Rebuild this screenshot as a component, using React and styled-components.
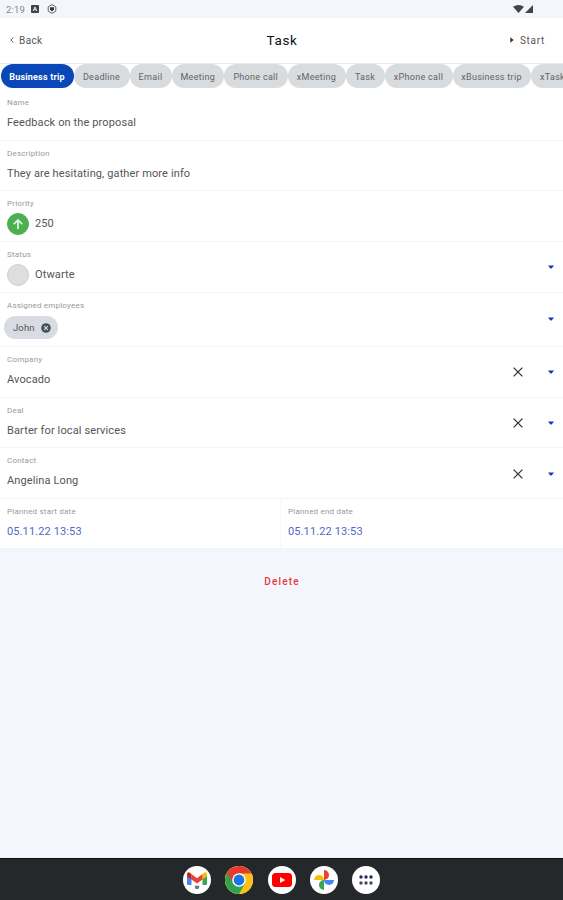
import React from "react";

import styled, { createGlobalStyle } from "styled-components";

const types = [
  { name: "Business trip", width: 73 },
  { name: "Deadline", width: 56 },
  { name: "Email", width: 42 },
  { name: "Meeting", width: 52.5 },
  { name: "Phone call", width: 63.5 },
  { name: "xMeeting", width: 58 },
  { name: "Task", width: 39 },
  { name: "xPhone call", width: 68 },
  { name: "xBusiness trip", width: 78 },
  { name: "xTask", width: 44 }
];

const Clear = () => (
  <svg width="10" height="10" viewBox="0 0 10 10">
    <path d="M.6.6l8.8 8.8M9.4.6L.6 9.4" stroke="#333" strokeWidth="1.3" />
  </svg>
);

const Caret = () => (
  <svg width="6" height="4" viewBox="0 0 6 4">
    <path d="M0 .5h6L3.6 3.5H2.4z" fill="#1c35bd" />
  </svg>
);

function Field({ label, height = 50.75, clear, select, children }) {
  return (
    <Row $height={height}>
      <Label>{label}</Label>
      <Content>{children}</Content>
      {select && (
        <Actions $clear={clear}>
          {clear && <Clear />}
          <Caret />
        </Actions>
      )}
    </Row>
  );
}

export default function App() {
  return (
    <Screen>
      <GlobalStyle />
      <StatusBar>
        <Clock>2:19</Clock>
        <svg width="8" height="8" viewBox="0 0 8 8">
          <rect width="8" height="8" rx="1" fill="#444" />
          <path d="M2.2 6L4 2l1.8 4M3 4.7h2" fill="none" stroke="#fff" strokeWidth=".9" />
        </svg>
        <svg width="10" height="10" viewBox="0 0 10 10">
          <path d="M5 .6l3.8 2.2v4.4L5 9.4 1.2 7.2V2.8z" fill="none" stroke="#666" strokeWidth="1" />
          <path d="M3 3.2h4v2.2L5 7.5 3 5.4z" fill="#333" />
        </svg>
        <Signals>
          <svg width="11" height="8" viewBox="0 0 11 8">
            <path d="M0 1.8Q5.5-1.6 11 1.8L5.5 8z" fill="#444" />
          </svg>
          <svg width="8" height="8" viewBox="0 0 8 8">
            <path d="M8 0v8H0z" fill="#444" />
          </svg>
        </Signals>
      </StatusBar>

      <Header>
        <NavButton>
          <svg width="4" height="6" viewBox="0 0 4 6">
            <path d="M3.4.5L.8 3l2.6 2.5" fill="none" stroke="#444" strokeWidth=".9" />
          </svg>
          Back
        </NavButton>
        <Title>Task</Title>
        <NavButton $end>
          <svg width="4" height="6" viewBox="0 0 4 6">
            <path d="M.3.3L3.7 3 .3 5.7z" fill="#333" />
          </svg>
          Start
        </NavButton>
      </Header>

      <Chips>
        {types.map((type, i) => (
          <Chip key={type.name} $width={type.width} $active={i === 0}>
            {type.name}
          </Chip>
        ))}
      </Chips>

      <Field label="Name">Feedback on the proposal</Field>
      <Field label="Description">They are hesitating, gather more info</Field>
      <Field label="Priority">
        <Dot $color="#4caf50">
          <svg width="12" height="12" viewBox="0 0 12 12">
            <path d="M6 11V2M1.8 6.2L6 2l4.2 4.2" fill="none" stroke="#d9f2da" strokeWidth="1.9" />
          </svg>
        </Dot>
        250
      </Field>
      <Field label="Status" select>
        <Dot $color="#dedede" $border="#cfcfcf" />
        Otwarte
      </Field>
      <Field label="Assigned employees" height={54} select>
        <Person>
          John
          <svg width="10" height="10" viewBox="0 0 10 10">
            <circle cx="5" cy="5" r="4.8" fill="#46525a" />
            <path d="M3.2 3.2l3.6 3.6M6.8 3.2L3.2 6.8" stroke="#dce0e5" strokeWidth="1.1" />
          </svg>
        </Person>
      </Field>
      <Field label="Company" select clear>Avocado</Field>
      <Field label="Deal" select clear>Barter for local services</Field>
      <Field label="Contact" select clear>Angelina Long</Field>
      <Dates>
        <Field label="Planned start date" height={50}>
          <DateValue>05.11.22 13:53</DateValue>
        </Field>
        <Field label="Planned end date" height={50}>
          <DateValue>05.11.22 13:53</DateValue>
        </Field>
      </Dates>

      <Delete>Delete</Delete>

      <Dock>
        <AppIcon>
          <svg width="20" height="20" viewBox="0 0 20 20">
            <path d="M0 4.5l4.5 3V15H1.2Q0 15 0 13.8z" fill="#4285f4" />
            <path d="M20 4.5l-4.5 3V15h3.3Q20 15 20 13.8z" fill="#34a853" />
            <path d="M15.5 4l2-1.6q2.5-.8 2.5 2.1v1.8L15.5 9.5z" fill="#fbbc04" />
            <path d="M4.5 4L10 8.2 15.5 4v5.5L10 13.6 4.5 9.5z" fill="#ea4335" />
            <path d="M0 4.5Q0 1.6 2.5 2.4L4.5 4v5.5L0 6.3z" fill="#c5221f" />
            <path d="M7.5 15.8h5L11.5 19h-3z" fill="#777" />
          </svg>
        </AppIcon>
        <AppIcon>
          <svg width="28" height="28" viewBox="0 0 28 28">
            <circle cx="14" cy="14" r="14" fill="#fbc116" />
            <path d="M14 14L1.88 7A14 14 0 0 0 14 28l6-10.5z" fill="#31a350" />
            <path d="M14 7.5h12.4A14 14 0 0 0 1.88 7l6.4 10.5L14 14z" fill="#e33b2e" />
            <circle cx="14" cy="14" r="6.8" fill="#fff" />
            <circle cx="14" cy="14" r="5.4" fill="#1a73e8" />
          </svg>
        </AppIcon>
        <AppIcon>
          <svg width="20" height="14" viewBox="0 0 20 14">
            <rect width="20" height="14" rx="3.5" fill="#f00" />
            <path d="M8 4l5.3 3L8 10z" fill="#fff" />
          </svg>
        </AppIcon>
        <AppIcon>
          <svg width="20" height="20" viewBox="0 0 20 20">
            <path d="M10 0a5 5 0 0 1 0 10z" fill="#ea4335" />
            <path d="M20 10a5 5 0 0 1-10 0z" fill="#4285f4" />
            <path d="M10 20a5 5 0 0 1 0-10z" fill="#34a853" />
            <path d="M0 10a5 5 0 0 1 10 0z" fill="#fbbc04" />
          </svg>
        </AppIcon>
        <AppIcon>
          <svg width="14" height="10" viewBox="0 0 14 10">
            {[2, 7, 12].map(x => (
              <g key={x} fill="#27235c">
                <circle cx={x} cy="2" r="1.7" />
                <circle cx={x} cy="8" r="1.7" fill="#4a475f" />
              </g>
            ))}
          </svg>
        </AppIcon>
      </Dock>
    </Screen>
  );
}


// styles
const GlobalStyle = createGlobalStyle`
  * {
    box-sizing: border-box;
  }

  body {
    margin: 0;
  }

  svg {
    display: block;
    flex-shrink: 0;
  }
`;

const Screen = styled.div`
  display: flex;
  flex-direction: column;
  width: 563px;
  height: 900px;
  overflow: hidden;
  background: #f3f7fd;
  color: #555;
  font-family: Roboto, "Liberation Sans", sans-serif;
`;

const StatusBar = styled.div`
  display: flex;
  align-items: center;
  gap: 8px;
  height: 18px;
  flex-shrink: 0;
  padding: 0 30px 0 6px;
`;

const Clock = styled.span`
  width: 17px;
  font-size: 9.5px;
  letter-spacing: 0.2px;
  color: #888;
`;

const Signals = styled.div`
  display: flex;
  gap: 1px;
  margin-left: auto;
`;

const Header = styled.header`
  display: grid;
  grid-template-columns: 1fr auto 1fr;
  align-items: center;
  height: 46px;
  flex-shrink: 0;
  padding: 0 18px 1px 10px;
  background: #fff;
  border-bottom: 1px solid #e6eaea;
`;

const Title = styled.h1`
  margin: 0 0 0 9px;
  font-size: 13.5px;
  font-weight: 400;
  letter-spacing: 0.6px;
  color: #111;
`;

const NavButton = styled.button`
  display: flex;
  align-items: center;
  justify-self: ${({ $end }) => ($end ? "end" : "start")};
  gap: ${({ $end }) => ($end ? 6 : 5)}px;
  padding: 0;
  border: 0;
  background: none;
  font-family: inherit;
  font-size: 10px;
  letter-spacing: ${({ $end }) => ($end ? 0.7 : 0.4)}px;
  color: #555;
`;

const Chips = styled.div`
  display: flex;
  height: 25.75px;
  flex-shrink: 0;
  padding-left: 0.5px;
  overflow: hidden;
  background: #fff;
`;

const Chip = styled.div`
  width: ${({ $width }) => $width}px;
  height: 24px;
  flex-shrink: 0;
  border-radius: 12px;
  background: ${({ $active }) => ($active ? "#0a47b8" : "#d8dcdf")};
  color: ${({ $active }) => ($active ? "#fff" : "#5f6367")};
  font-size: 9px;
  font-weight: ${({ $active }) => ($active ? 700 : 400)};
  line-height: 26px;
  letter-spacing: ${({ $active }) => ($active ? 0.2 : 0.3)}px;
  text-align: center;
  white-space: nowrap;
`;

const Row = styled.div`
  position: relative;
  height: ${({ $height }) => $height}px;
  flex-shrink: 0;
  padding: 8px 7px 0;
  background: #fff;
  border-bottom: 1px solid #f3f4f5;
`;

const Label = styled.div`
  height: 10px;
  font-size: 8px;
  line-height: 10px;
  letter-spacing: 0.2px;
  color: #999;
`;

const Content = styled.div`
  display: flex;
  align-items: center;
  height: 22px;
  margin-top: 3.5px;
  font-size: 11px;
  letter-spacing: 0.12px;
`;

const Actions = styled.div`
  position: absolute;
  top: ${({ $clear }) => ($clear ? 1 : 0)}px;
  right: 9px;
  bottom: 0;
  display: flex;
  align-items: center;
  gap: 25px;
`;

const Dot = styled.span`
  display: flex;
  align-items: center;
  justify-content: center;
  width: 22px;
  height: 22px;
  margin-right: 6px;
  border: 1px solid ${({ $color, $border }) => $border || $color};
  border-radius: 50%;
  background: ${({ $color }) => $color};
`;

const Person = styled.span`
  display: flex;
  align-items: center;
  gap: 6px;
  height: 23px;
  margin: 5px 0 0 -3px;
  padding: 0 7px 0 9px;
  border-radius: 12px;
  background: #d8dce2;
  font-size: 9.5px;
`;

const Dates = styled.div`
  display: grid;
  grid-template-columns: 281px 282px;
  flex-shrink: 0;

  > :first-child {
    border-right: 1px solid #f6f7f8;
  }
`;

const DateValue = styled.span`
  color: #5468c8;
`;

const Delete = styled.button`
  align-self: center;
  margin-top: 26px;
  padding: 0 0 0 1px;
  border: 0;
  background: none;
  font-family: inherit;
  font-size: 10px;
  font-weight: 500;
  line-height: 14px;
  letter-spacing: 1.2px;
  color: #e5393b;
`;

const Dock = styled.footer`
  display: flex;
  align-items: center;
  justify-content: center;
  gap: 14.25px;
  height: 42px;
  flex-shrink: 0;
  margin-top: auto;
  background: #25282a;
  border-top: 1px solid #101112;
`;

const AppIcon = styled.div`
  display: flex;
  align-items: center;
  justify-content: center;
  width: 28px;
  height: 28px;
  border-radius: 50%;
  background: #fff;
`;
